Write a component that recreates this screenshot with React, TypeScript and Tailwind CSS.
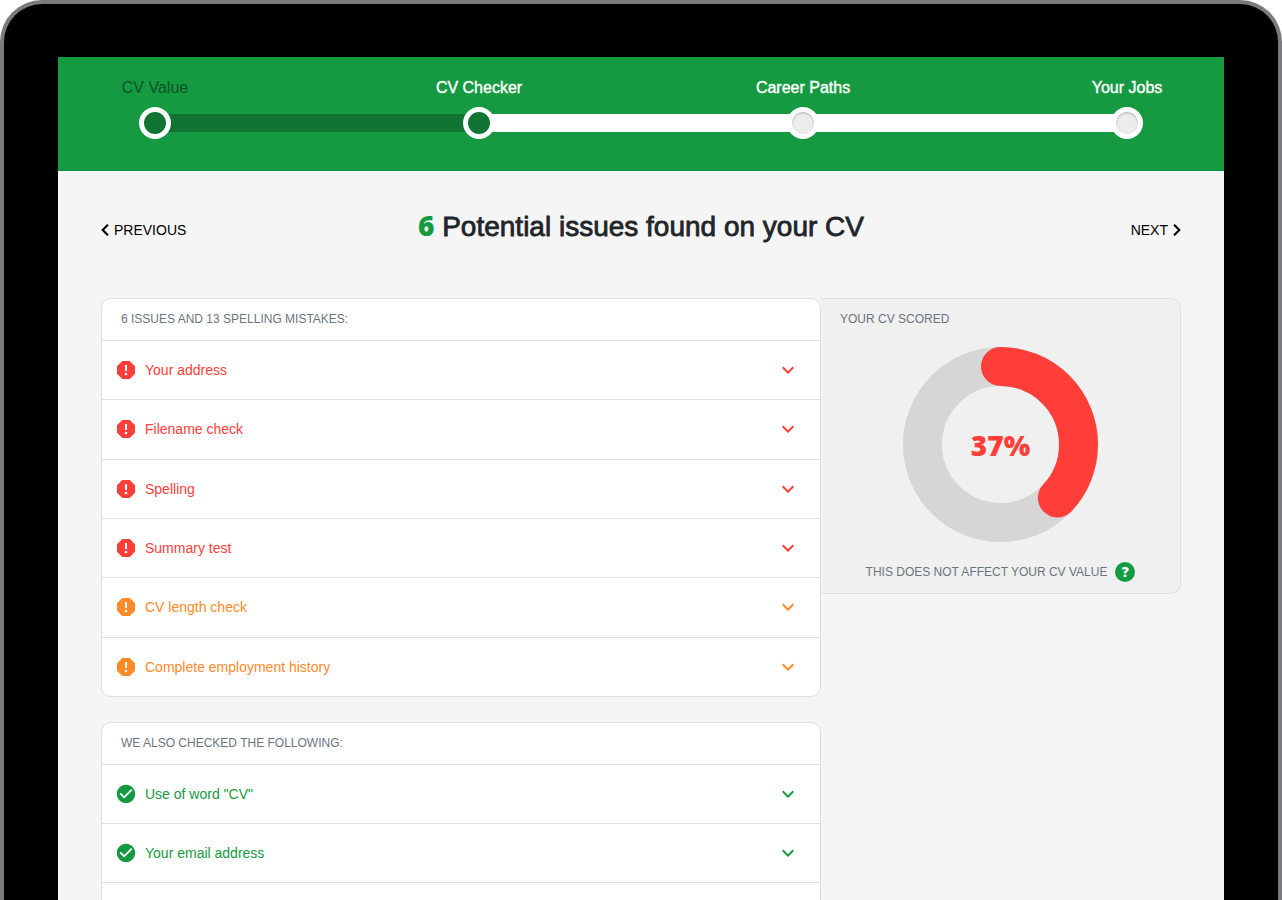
import { useState } from "react";
import { MdCheckCircle, MdExpandMore, MdReport } from "react-icons/md";

type Status = "error" | "warning" | "ok";

interface Check {
    label: string;
    status: Status;
}

const steps = [
    { label: "CV Value", done: true, current: true },
    { label: "CV Checker", done: true, current: false },
    { label: "Career Paths", done: false, current: false },
    { label: "Your Jobs", done: false, current: false },
];

const issues: Check[] = [
    { label: "Your address", status: "error" },
    { label: "Filename check", status: "error" },
    { label: "Spelling", status: "error" },
    { label: "Summary test", status: "error" },
    { label: "CV length check", status: "warning" },
    { label: "Complete employment history", status: "warning" },
];

const passed: Check[] = [
    { label: 'Use of word "CV"', status: "ok" },
    { label: "Your email address", status: "ok" },
];

const colors: Record<Status, string> = {
    error: "text-[#ff3e3a]",
    warning: "text-[#ff8a27]",
    ok: "text-[#159a42]",
};

function Progress() {
    return (
        <header className="bg-[#159a42] border-b border-[#0b9038] px-[81px] pt-[21px] pb-[31px]">
            <ol className="flex">
                {steps.map((step, i) => (
                    <li key={step.label} className={`flex items-end ${i < steps.length - 1 ? "flex-1" : ""}`}>
                        <a href="#" className="relative z-10 flex w-8 shrink-0 flex-col items-center">
                            <span
                                className={`whitespace-nowrap text-base leading-5 mb-[9px] ${
                                    step.current ? "text-[#0a5424]" : "text-white [-webkit-text-stroke:0.4px_white]"
                                }`}
                            >
                                {step.label}
                            </span>
                            <span
                                className={`size-8 rounded-full border-5 border-white ${
                                    step.done ? "bg-[#127433]" : "bg-[#ececec] shadow-[inset_0_1px_2px_#aaaaaa]"
                                }`}
                            />
                        </a>
                        {i < steps.length - 1 && (
                            <span
                                className={`h-[18px] flex-1 -mx-1 mb-[7px] ${
                                    steps[i + 1].done ? "bg-[#127433]" : "bg-white"
                                }`}
                            />
                        )}
                    </li>
                ))}
            </ol>
        </header>
    );
}

function CheckRow({ check }: { check: Check }) {
    const [open, setOpen] = useState(false);
    const Icon = check.status === "ok" ? MdCheckCircle : MdReport;

    return (
        <li className="flex grow border-t border-[#dedfe0]">
            <button
                onClick={() => setOpen(!open)}
                aria-expanded={open}
                className={`flex min-h-[58px] w-full items-center gap-[7px] pl-3 pr-5 text-left text-sm ${colors[check.status]}`}
            >
                <span className="flex size-6 shrink-0 items-center justify-center">
                    <Icon className={check.status === "ok" ? "size-[22px]" : "size-6"} />
                </span>
                <span className="flex-1">{check.label}</span>
                <MdExpandMore className={`size-6 shrink-0 ${open ? "rotate-180" : ""}`} />
            </button>
        </li>
    );
}

function Donut({ percent }: { percent: number }) {
    return (
        <div className="relative mx-auto size-[195px]">
            <svg viewBox="0 0 195 195" className="size-full" fill="none" strokeWidth="39">
                <circle cx="97.5" cy="97.5" r="78" stroke="#d6d6d6" />
                <circle
                    cx="97.5"
                    cy="97.5"
                    r="78"
                    stroke="#ff3e3a"
                    strokeLinecap="round"
                    pathLength="100"
                    strokeDasharray={`${percent} 100`}
                    transform="rotate(-90 97.5 97.5)"
                />
            </svg>
            <span className="absolute inset-0 flex items-center justify-center font-['Open_Sans',sans-serif] text-[28px] font-extrabold text-[#ff3e3a]">
                {percent}%
            </span>
        </div>
    );
}

export default function App() {
    return (
        <div className="h-screen overflow-hidden bg-white font-['Liberation_Sans',Arial,sans-serif]">
            <div className="flex h-full flex-col rounded-t-[42px] border-4 border-b-0 border-[#7a7b7f] bg-black px-[54px] pt-[53px]">
                <Progress />
                <main className="flex flex-1 flex-col bg-[#f5f5f5] px-[43px] pt-[34px]">
                    <div className="flex items-center justify-between">
                        <a href="#" className="flex flex-1 items-center gap-[5px] pt-2 text-sm text-black">
                            <svg viewBox="8 6 8 12" className="h-3 w-2" fill="currentColor">
                                <path d="M15.7 7.4 14.2 6l-6 6 6 6 1.5-1.4L11.1 12z" />
                            </svg>
                            PREVIOUS
                        </a>
                        <h1 className="text-[28px] leading-10 text-[#212529] [-webkit-text-stroke:0.8px_#212529]">
                            <span className="font-['Open_Sans',sans-serif] font-extrabold text-[#159a42] [-webkit-text-stroke:0]">6</span>{" "}
                            Potential issues found on your CV
                        </h1>
                        <a href="#" className="flex flex-1 items-center justify-end gap-[5px] pt-2 text-sm text-black">
                            NEXT
                            <svg viewBox="8 6 8 12" className="h-3 w-2" fill="currentColor">
                                <path d="M8.3 7.4 9.8 6l6 6-6 6-1.5-1.4L12.9 12z" />
                            </svg>
                        </a>
                    </div>

                    <div className="mt-[51px] grid flex-1 grid-cols-3">
                        <div className="col-span-2 flex flex-col gap-[25px]">
                            <section className="rounded-[10px] border border-[#dedfe0] bg-white">
                                <h2 className="px-[19px] pt-[10px] pb-[11px] text-xs leading-5 text-[#6c757d]">6 ISSUES AND 13 SPELLING MISTAKES:</h2>
                                <ul className="flex min-h-[356px] flex-col">
                                    {issues.map((check) => (
                                        <CheckRow key={check.label} check={check} />
                                    ))}
                                </ul>
                            </section>
                            <section className="flex-1 rounded-t-[10px] border border-b-0 border-[#dedfe0] bg-white">
                                <h2 className="px-[19px] pt-[10px] pb-[11px] text-xs leading-5 text-[#6c757d]">WE ALSO CHECKED THE FOLLOWING:</h2>
                                <ul className="flex flex-col border-b border-[#dedfe0]">
                                    {passed.map((check) => (
                                        <CheckRow key={check.label} check={check} />
                                    ))}
                                </ul>
                            </section>
                        </div>

                        <aside className="self-start rounded-r-[10px] border border-l-0 border-[#dedfe0] bg-[#f0f0f0] pb-[11px]">
                            <h2 className="px-[19px] pt-[10px] pb-[18px] text-xs leading-5 text-[#6c757d]">YOUR CV SCORED</h2>
                            <Donut percent={37} />
                            <div className="mt-5 flex items-center justify-center gap-2 text-xs text-[#6c757d]">
                                THIS DOES NOT AFFECT YOUR CV VALUE
                                <button
                                    aria-label="Help"
                                    className="flex size-5 items-center justify-center rounded-full bg-[#159a42] font-['Open_Sans',sans-serif] text-sm font-extrabold text-white"
                                >
                                    ?
                                </button>
                            </div>
                        </aside>
                    </div>
                </main>
            </div>
        </div>
    );
}
